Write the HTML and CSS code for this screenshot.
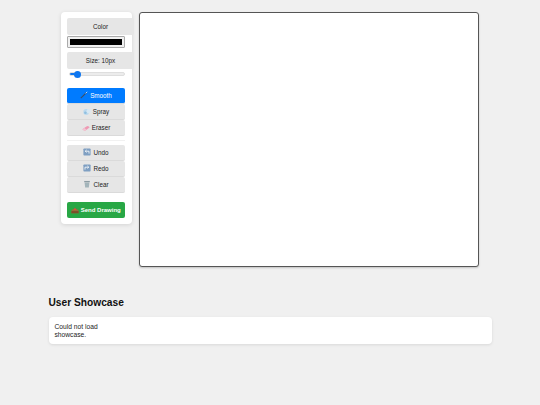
FILE: index.html
```html
<!DOCTYPE html>
<html lang="en">
<head>
<meta charset="utf-8">
<title>Drawing</title>
<link rel="stylesheet" href="styles.css">
</head>
<body>
<main class="studio">
  <aside class="panel">
    <div class="chip">Color</div>
    <div class="swatch"><span class="swatch-fill"></span></div>
    <div class="chip chip-size">Size: 10px</div>
    <div class="slider"><span class="fill"></span><span class="thumb"></span></div>
    <div class="group group-tools">
      <button class="btn active"><svg class="ico" viewBox="0 0 10 10"><path d="M1 9 L8 2" stroke="#3d4f66" stroke-width="1.4"/><path d="M7 3 L9 1" stroke="#cfe0f2" stroke-width="1.2"/></svg>Smooth</button>
      <button class="btn"><svg class="ico" viewBox="0 0 10 10"><circle cx="4" cy="5" r="3.6" fill="#bcd9ee"/><circle cx="7" cy="4" r="2.6" fill="#d8e8f3"/><circle cx="3" cy="6" r="1.6" fill="#8fbfe0"/></svg>Spray</button>
      <button class="btn"><svg class="ico" viewBox="0 0 10 10"><path d="M0.5 6.5 L5.5 3 Q7 2.2 8.5 3 L9.6 4.2 L4.5 8 L2.5 8 Z" fill="#ee9ab4"/><path d="M0.5 6.5 L2.5 8 L4.5 8 L5.5 7.2 L3 5 Z" fill="#f4c6d4"/></svg>Eraser</button>
    </div>
    <div class="rule"></div>
    <div class="group">
      <button class="btn"><svg class="ico" viewBox="0 0 10 10"><rect x="0.5" y="0.5" width="9" height="9" rx="1" fill="#7f9fc2"/><path d="M7.5 7 V4 H3 M4.5 2.4 L2.8 4 L4.5 5.6" fill="none" stroke="#fff" stroke-width="1"/></svg>Undo</button>
      <button class="btn"><svg class="ico" viewBox="0 0 10 10"><rect x="0.5" y="0.5" width="9" height="9" rx="1" fill="#7f9fc2"/><path d="M2.5 7 V4 H7 M5.5 2.4 L7.2 4 L5.5 5.6" fill="none" stroke="#fff" stroke-width="1"/></svg>Redo</button>
      <button class="btn"><svg class="ico" viewBox="0 0 10 10"><path d="M2 3 H8 L7.3 9.5 H2.7 Z" fill="#a3b4ba"/><rect x="1.5" y="1.2" width="7" height="1.6" fill="#8c9ca3"/></svg>Clear</button>
    </div>
    <button class="send"><svg class="ico" viewBox="0 0 10 10"><path d="M0.5 6 L2 4 H8 L9.5 6 V9 H0.5 Z" fill="#9a6a3a"/><path d="M3 5 L5 2 L7 5 Z" fill="#d8503c"/><rect x="0.5" y="6.4" width="9" height="2.6" fill="#7a4f28"/></svg>Send Drawing</button>
  </aside>
  <div class="canvas"></div>
</main>
<section class="showcase">
  <h2 class="showcase-title">User Showcase</h2>
  <div class="showcase-card"><p class="showcase-msg">Could not load showcase.</p></div>
</section>
</body>
</html>
```
FILE: styles.css
```css
* { box-sizing: border-box; }
html, body { margin: 0; height: 100%; }
body {
  background: #f0f0f0;
  font-family: "Liberation Sans", Arial, sans-serif;
  color: #222;
  overflow: hidden;
}
.studio {
  display: flex;
  justify-content: center;
  align-items: flex-start;
  gap: 7px;
  padding-top: 12px;
}
.panel {
  width: 71px;
  height: 212px;
  padding: 6px;
  background: #fff;
  border-radius: 4px;
  box-shadow: 0 1px 4px rgba(0,0,0,.12);
  display: flex;
  flex-direction: column;
  flex: none;
}
.chip {
  width: 67px;
  height: 16.5px;
  background: #e6e6e6;
  border-radius: 2px;
  font-size: 6.3px;
  display: flex;
  align-items: center;
  justify-content: center;
  color: #222;
}
.swatch {
  width: 58px;
  height: 12px;
  margin-top: 1px;
  padding: 2px;
  border: 1px solid #aaa;
  border-radius: 1px;
  background: #efefef;
}
.swatch-fill { display: block; height: 100%; background: #000; }
.chip-size { margin-top: 4.5px; }
.slider {
  position: relative;
  width: 56px;
  height: 3.5px;
  margin: 3.5px 0 0 2px;
  background: #ececec;
  border-radius: 2px;
  border: .5px solid #dedede;
}
.fill {
  display: block;
  width: 5px;
  height: 100%;
  background: #0f77f0;
  border-radius: 2px;
}
.thumb {
  position: absolute;
  left: 3.5px;
  top: -2.25px;
  width: 7px;
  height: 7px;
  border-radius: 50%;
  background: #0f77f0;
}
.group { display: flex; flex-direction: column; }
.group-tools { margin-top: 12px; }
.btn {
  width: 58px;
  height: 16px;
  border: 0;
  padding: 0;
  border-radius: 2px;
  background: #e6e6e6;
  border-bottom: .5px solid #dadada;
  color: #222;
  font: 6.3px "Liberation Sans", Arial, sans-serif;
  display: flex;
  align-items: center;
  justify-content: center;
  gap: 2px;
}
.btn.active { background: #007bff; color: #fff; height: 16.5px; }
.ico { width: 8px; height: 8px; flex: none; }
.rule { height: 1px; background: #f1f1f1; margin: 4px 0 3.5px; width: 58px; }
.send {
  width: 58px;
  height: 16px;
  margin-top: 9px;
  border: 0;
  padding: 0;
  border-radius: 2px;
  background: #28a745;
  color: #fff;
  font: bold 6px "Liberation Sans", Arial, sans-serif;
  display: flex;
  align-items: center;
  justify-content: center;
  gap: 1.5px;
}
.canvas {
  width: 340px;
  height: 254.5px;
  flex: none;
  background: #fff;
  border: 1px solid #555;
  border-radius: 3px;
  box-shadow: 0 1px 2px rgba(0,0,0,.2);
}
.showcase { width: 443px; margin: 29.5px auto 0; }
.showcase-title {
  margin: 0;
  font-size: 10.2px;
  line-height: 13px;
  font-weight: bold;
  color: #111;
}
.showcase-card {
  margin-top: 8px;
  height: 27px;
  padding: 6px;
  background: #fff;
  border-radius: 4px;
  box-shadow: 0 1px 3px rgba(0,0,0,.1);
}
.showcase-msg {
  margin: 0;
  width: 56px;
  font-size: 6.7px;
  line-height: 7.5px;
  color: #222;
}
```
